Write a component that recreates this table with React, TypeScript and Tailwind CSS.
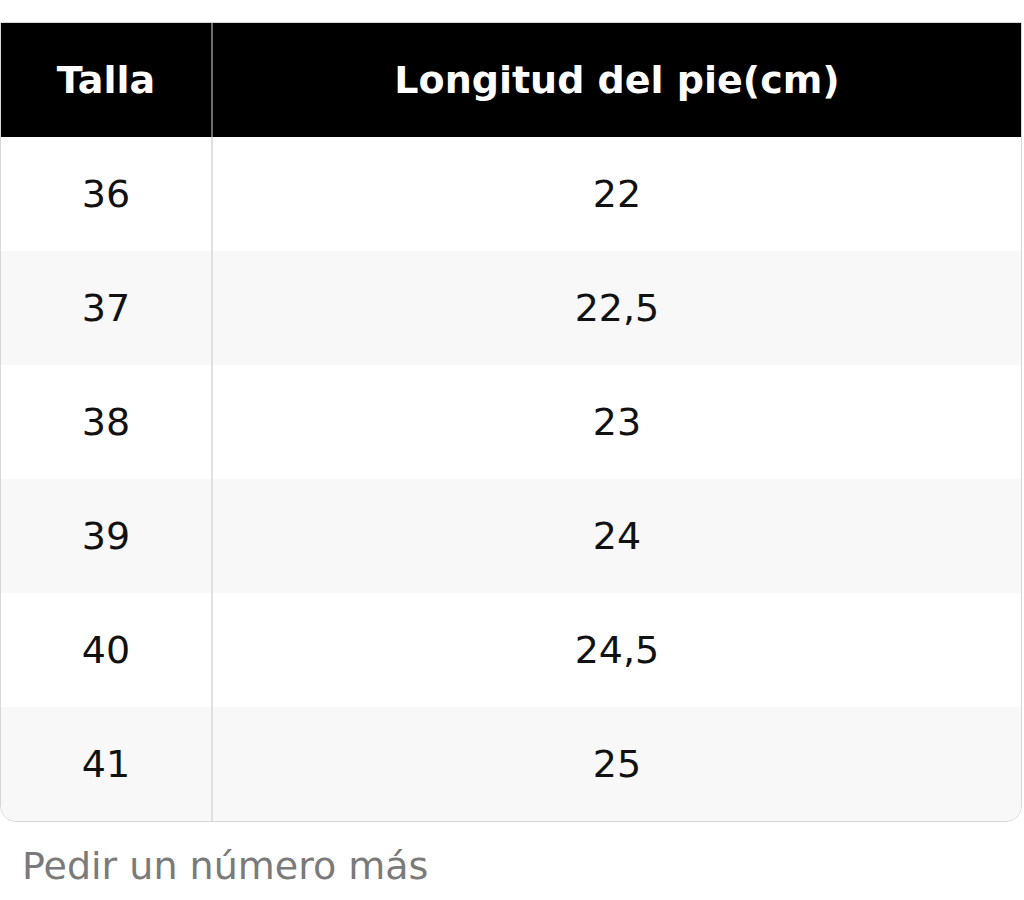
const rows = [
  { size: "36", length: "22" },
  { size: "37", length: "22,5" },
  { size: "38", length: "23" },
  { size: "39", length: "24" },
  { size: "40", length: "24,5" },
  { size: "41", length: "25" },
]

export default function App() {
  return (
    <div className="min-h-[900px] bg-white pt-[22px] font-['DejaVu_Sans',sans-serif]">
      <div className="w-[1022px] overflow-hidden rounded-b-[16px] border border-[#d6d6d6]">
        <div className="grid h-[114px] grid-cols-[212px_1fr] bg-black text-[38px] font-bold text-white">
          <div className="flex items-center justify-center border-r-2 border-[#6b6b6b]">Talla</div>
          <div className="flex items-center justify-center">Longitud del pie(cm)</div>
        </div>
        {rows.map((row, i) => (
          <div
            key={row.size}
            className={
              "grid h-[114px] grid-cols-[212px_1fr] text-[38px] text-[#111] " +
              (i % 2 === 1 ? "bg-[#f8f8f8]" : "bg-white")
            }
          >
            <div className="flex items-center justify-center border-r-2 border-[#e0e0e0]">{row.size}</div>
            <div className="flex items-center justify-center">{row.length}</div>
          </div>
        ))}
      </div>
      <p className="mt-[22px] pl-[22px] text-[38px] leading-[44px] text-[#7a7a7a]">Pedir un número más</p>
    </div>
  )
}
